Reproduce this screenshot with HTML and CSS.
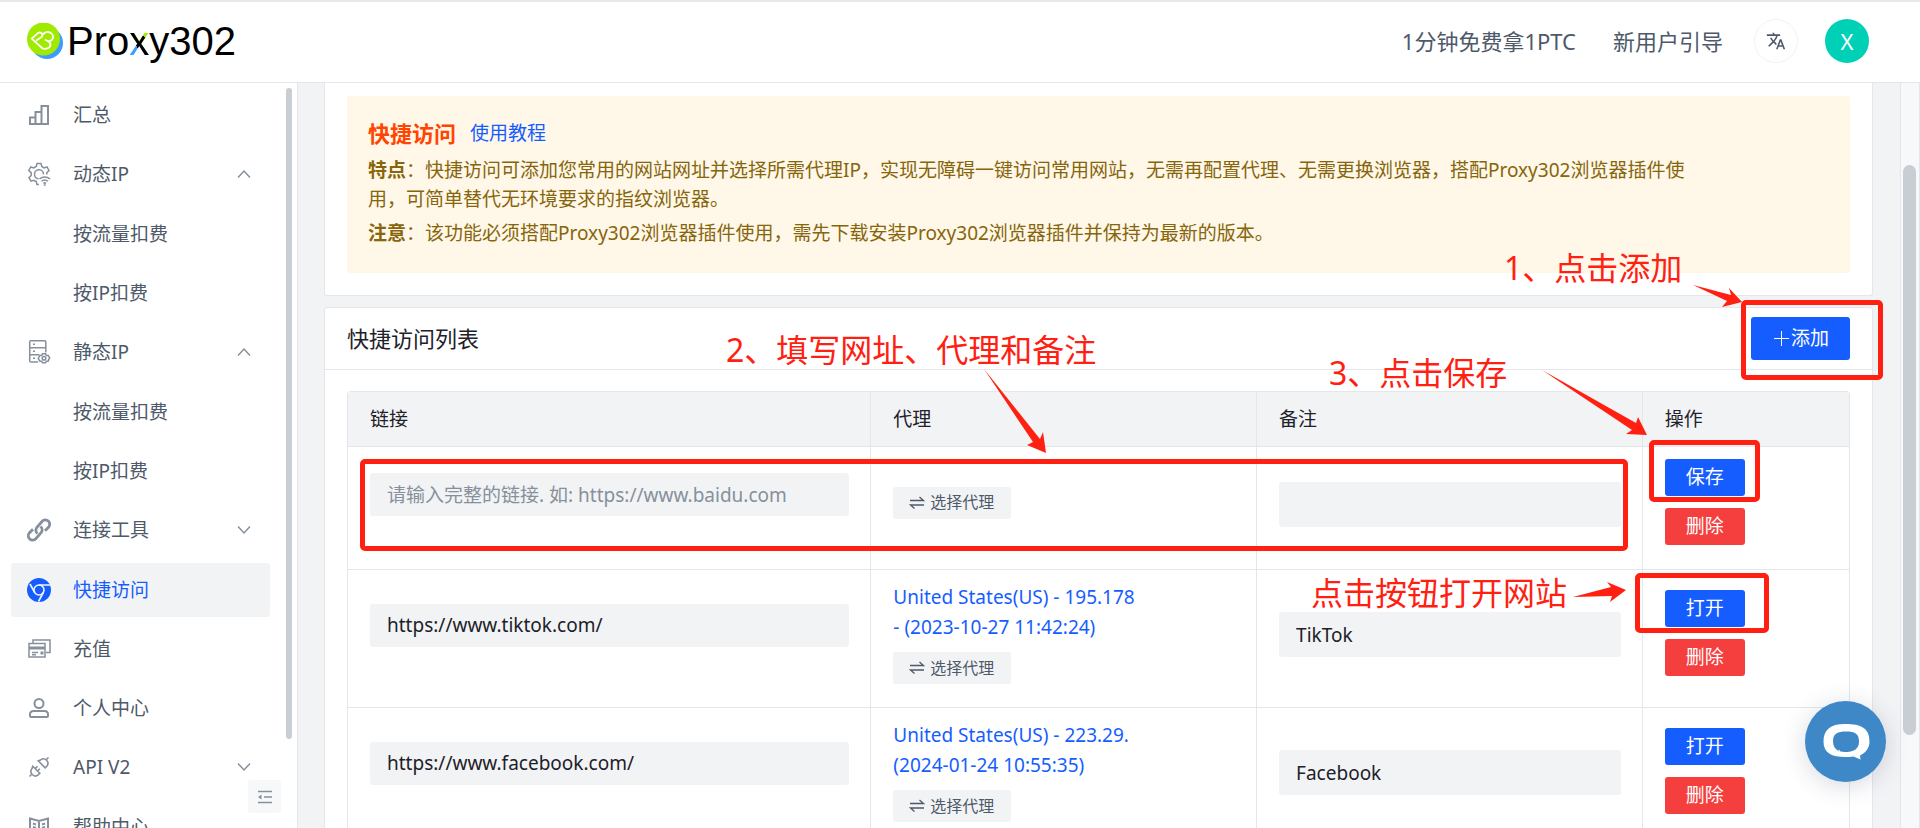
FILE: index.html
```html
<!DOCTYPE html>
<html lang="zh-CN">
<head>
<meta charset="utf-8">
<title>Proxy302 快捷访问</title>
<link rel="stylesheet" href="styles.css">
</head>
<body>
<svg class="sprite" aria-hidden="true">
  <symbol id="up" viewBox="0 0 14 14"><path d="M1 10.500 7 4l6 6.500"/></symbol>
  <symbol id="down" viewBox="0 0 14 14"><path d="M1 3.500 7 10l6-6.500"/></symbol>
  <symbol id="swap" viewBox="0 0 16 16"><path d="M1 5.500h13.500L10.500 2M15 10H1.500l4 3.500"/></symbol>
</svg>

<header class="topbar">
  <a class="logo" href="#">
    <svg class="logo-mark" viewBox="0 0 37 37" aria-hidden="true">
      <circle cx="20" cy="20" r="16" fill="#3d9bff"/>
      <circle cx="16.500" cy="16" r="16.500" fill="#a0ea00"/>
      <g fill="none" stroke="#fff" stroke-width="1.800" stroke-linecap="round" stroke-linejoin="round">
        <path d="M9.700 17.300 14.500 14c2.200-1.800-.2-5.800-3-4.300L4.700 15.700 15 25c2 1.500 6.500.8 8-1.500 1-2 0-4-1.800-5.200 3.500-.3 5.300-2.500 4.800-5.300-.5-3-3.700-4.500-6.500-3.800-1.300.2-2.300.8-3 1.600"/>
        <path d="M21.200 18.300 18.500 17"/>
      </g>
    </svg>
    <span class="logo-text">Pro<span class="logo-x">x</span>y302</span>
  </a>
  <nav class="topnav">
    <a href="#">1分钟免费拿1PTC</a>
    <a href="#">新用户引导</a>
    <button class="lang" aria-label="切换语言">
      <svg viewBox="0 0 24 24" width="20" height="20"><path d="M12.870 15.070l-2.540-2.510.03-.03A17.520 17.520 0 0 0 14.070 6H17V4h-7V2H8v2H1v2h11.170C11.500 7.920 10.440 9.750 9 11.350 8.070 10.320 7.300 9.190 6.690 8h-2c.73 1.630 1.730 3.170 2.980 4.560l-5.090 5.020L4 19l5-5 3.110 3.110.76-2.040zM18.500 10h-2L12 22h2l1.120-3h4.750L21 22h2l-4.500-12zm-2.620 7l1.620-4.330L19.120 17h-3.240z"/></svg>
    </button>
    <button class="avatar">X</button>
  </nav>
</header>

<div class="body">
  <aside class="sidebar">
    <nav class="menu">
      <a class="item" href="#"><svg class="ico" viewBox="0 0 24 24"><path d="M3 14.500h5.500V21H3zM8.500 9h6v12h-6zM14.500 3H21v18h-6.500z"/></svg><span>汇总</span></a>
      <a class="item parent" href="#"><svg class="ico thin" viewBox="0 0 24 24"><path d="M12 22.500h-2l-.8-3-2.200-1.200-3 .9-2-3.500 2.200-2.200v-2.800L1.800 8.500l2-3.500 3 .9L9.200 4.500 10 1.500h4l.8 3L17 5.900l3-.9 2 3.500-2.200 2.200v1.800"/><path d="M16.500 12.500a4.500 4.500 0 1 0-5 4.300M12.500 17a8 8 0 0 1 10.500 0M14.500 19.300a5 5 0 0 1 6.500 0M16.400 21.300a2.500 2.500 0 0 1 2.700 0"/><circle cx="17.700" cy="23" r=".3"/></svg><span>动态IP</span><svg class="chev"><use href="#up"/></svg></a>
      <div class="submenu">
        <a class="item" href="#">按流量扣费</a>
        <a class="item" href="#">按IP扣费</a>
      </div>
      <a class="item parent" href="#"><svg class="ico thin" viewBox="0 0 24 24"><path d="M11 22H4a1.300 1.300 0 0 1-1.300-1.300V2A1.300 1.300 0 0 1 4 .7h13.500A1.300 1.300 0 0 1 18.800 2v10.500M2.700 7.700h16M2.700 14.700h9.500M6 4.300h2M6 11.200h2M6 18.300h2"/><path d="M15.500 13.800h3l.9 1.600h1.800l1.500 2.600-.9 1.200-.6 2h-1.800l-.9 1.600h-3l-.9-1.600h-1.800L11.300 18.600l1.500-3.200h1.800z"/><circle cx="17" cy="18.300" r="1.800"/></svg><span>静态IP</span><svg class="chev"><use href="#up"/></svg></a>
      <div class="submenu">
        <a class="item" href="#">按流量扣费</a>
        <a class="item" href="#">按IP扣费</a>
      </div>
      <a class="item parent" href="#"><svg class="ico bold" viewBox="0 0 24 24"><path d="M10.500 15.500a4.500 4.500 0 0 1-.6-6.200l5.300-6a4.300 4.300 0 0 1 6.300 5.900L18 12.800"/><path d="M13.500 8.500a4.500 4.500 0 0 1 .6 6.200l-5.300 6a4.300 4.300 0 0 1-6.300-5.900L6 11.200"/></svg><span>连接工具</span><svg class="chev"><use href="#down"/></svg></a>
      <a class="item active" href="#"><svg class="ico" viewBox="0 0 24 24"><circle class="fill" cx="12" cy="12" r="12"/><g class="cut"><circle cx="12" cy="12" r="5"/><path d="M12 7h11M7.700 14.500 3 6M16.300 14.500 11.500 23.500"/></g></svg><span>快捷访问</span></a>
      <a class="item" href="#"><svg class="ico thin" viewBox="0 0 24 24"><path d="M2 6.500h16V20H2zM6 6V3h17v12.500h-4M5 15.500h6M5 17.800h4"/><path class="fill" d="M2 9.500h16v3H2zM13.500 14.500h3v3h-3z"/></svg><span>充值</span></a>
      <a class="item" href="#"><svg class="ico" viewBox="0 0 24 24"><circle cx="12" cy="7.500" r="4.500"/><path d="M3 20v-1.500C3 16.500 4.500 15 6.500 15h11c2 0 3.500 1.500 3.500 3.500V20a1 1 0 0 1-1 1H4a1 1 0 0 1-1-1z"/></svg><span>个人中心</span></a>
      <a class="item parent" href="#"><svg class="ico mid" viewBox="0 0 24 24"><path d="m2.500 21.500 2.500-2.500M19 5l2.500-2.500M5.800 11.200l7 7-1.600 1.600a4.400 4.400 0 0 1-6.200-6.200zM11.200 5.800l7 7 1.600-1.600a4.400 4.400 0 0 0-6.200-6.200zM8.200 13.600l2.300-2.300M10.600 16l2.300-2.300"/></svg><span>API V2</span><svg class="chev"><use href="#down"/></svg></a>
      <a class="item" href="#"><svg class="ico" viewBox="0 0 24 24"><path d="M12 6v15M3 3.500 12 6l9-2.500V19l-9 2.500L3 19zM6 8.500l3 1M6 12l3 1M18 8.500l-3 1M18 12l-3 1"/></svg><span>帮助中心</span></a>
    </nav>
    <div class="side-thumb"></div>
    <button class="collapse" aria-label="收起菜单"><svg viewBox="0 0 16 16" width="16" height="16"><path d="M1 2.500h14M7 8h8M1 13.500h14" fill="none" stroke="#86909c" stroke-width="1.500"/><path d="M4.500 5.500v5L1 8z" fill="#86909c"/></svg></button>
  </aside>

  <main class="content">
    <section class="card card-intro">
      <div class="notice">
        <div class="notice-head"><h2>快捷访问</h2><a href="#">使用教程</a></div>
        <p><strong>特点</strong>：快捷访问可添加您常用的网站网址并选择所需代理IP，实现无障碍一键访问常用网站，无需再配置代理、无需更换浏览器，搭配Proxy302浏览器插件使用，可简单替代无环境要求的指纹浏览器。</p>
        <p><strong>注意</strong>：该功能必须搭配Proxy302浏览器插件使用，需先下载安装Proxy302浏览器插件并保持为最新的版本。</p>
      </div>
    </section>

    <section class="card">
      <div class="card-head">
        <h1>快捷访问列表</h1>
        <button class="btn-add"><svg viewBox="0 0 19 19" width="19" height="19"><path d="M9.500 2v15M2 9.500h15" stroke="#fff"/></svg>添加</button>
      </div>
      <div class="card-body">
        <table class="list">
          <colgroup><col class="c-link"><col class="c-proxy"><col class="c-note"><col class="c-act"></colgroup>
          <thead><tr><th>链接</th><th>代理</th><th>备注</th><th>操作</th></tr></thead>
          <tbody>
            <tr>
              <td><input class="url" type="text" aria-label="链接" placeholder="请输入完整的链接. 如: https://www.baidu.com"></td>
              <td><button class="pick"><svg><use href="#swap"/></svg>选择代理</button></td>
              <td><input class="note" type="text" aria-label="备注"></td>
              <td><button class="act">保存</button><button class="act del">删除</button></td>
            </tr>
            <tr>
              <td><input class="url" type="text" aria-label="链接" value="https://www.tiktok.com/"></td>
              <td><a class="proxy" href="#">United States(US) - 195.178<br>- (2023-10-27 11:42:24)</a><button class="pick"><svg><use href="#swap"/></svg>选择代理</button></td>
              <td><input class="note" type="text" aria-label="备注" value="TikTok"></td>
              <td><button class="act">打开</button><button class="act del">删除</button></td>
            </tr>
            <tr>
              <td><input class="url" type="text" aria-label="链接" value="https://www.facebook.com/"></td>
              <td><a class="proxy" href="#">United States(US) - 223.29.<br>(2024-01-24 10:55:35)</a><button class="pick"><svg><use href="#swap"/></svg>选择代理</button></td>
              <td><input class="note" type="text" aria-label="备注" value="Facebook"></td>
              <td><button class="act">打开</button><button class="act del">删除</button></td>
            </tr>
          </tbody>
        </table>
      </div>
    </section>
  </main>
  <div class="track"><div class="thumb"></div></div>
</div>

<button class="chat" aria-label="在线客服">
  <svg viewBox="0 0 81 81" width="81" height="81"><path fill="#fff" fill-rule="evenodd" d="M40 23c16 0 24.500 4 24.500 17.500 0 6.500-3.500 11-9.500 14l.5 4-7-3c-3 .5-5 .5-8 .5-14 0-22-4-22-15.500S25 23 40 23zm1.500 7.500c-9 0-13.500 2-13.500 10 0 4.500 2 7.500 5.500 9.500l.5-1.500 1.500 2 4 .5c9 0 14.500-2.500 14.500-10.500s-4.500-10-12.500-10z"/></svg>
</button>

<div class="guide">
  <svg class="arrows" viewBox="0 0 1920 828" width="1920" height="828" aria-hidden="true">
    <path d="M1693 285 1731 295 1729 288 1742 302 1722 307 1727 301z"/>
    <path d="M984 369 1040 439 1043 432 1046 453 1027 445 1033 442z"/>
    <path d="M1542 370 1636 423 1638 417 1647 435 1626 434 1632 430z"/>
    <path d="M1573 597 1611 587 1607 582 1626 590 1610 602 1612 596z"/>
  </svg>
  <span class="tip tip-add">1、点击添加</span>
  <span class="tip tip-fill">2、填写网址、代理和备注</span>
  <span class="tip tip-save">3、点击保存</span>
  <span class="tip tip-open">点击按钮打开网站</span>
  <div class="box box-add"></div>
  <div class="box box-fill"></div>
  <div class="box box-save"></div>
  <div class="box box-open"></div>
</div>
</body>
</html>
```
FILE: styles.css
```css
* { box-sizing: border-box; }

body {
  position: relative;
  display: flex;
  flex-direction: column;
  height: 100vh;
  margin: 0;
  overflow: hidden;
  background: #f2f3f5;
  color: #1d2129;
  font: 19px/29px "Noto Sans", "Noto Sans CJK SC", sans-serif;
}

a { color: inherit; text-decoration: none; }
button, input { border: 0; border-radius: 3px; font: inherit; }
h1, h2, p { margin: 0; }
.sprite { display: none; }

/* Top bar */
.topbar {
  display: flex;
  flex: none;
  justify-content: space-between;
  align-items: center;
  height: 83px;
  padding: 0 51px 2px 27px;
  border-top: 2px solid #e8e8e8;
  border-bottom: 1px solid #e5e6eb;
  background: #fff;
}
.logo { display: flex; align-items: center; gap: 3px; }
.logo-mark { width: 37px; height: 37px; }
.logo-text { color: #000; font: 40px/44px "Liberation Sans", sans-serif; }
.logo-x {
  background: linear-gradient(55deg, transparent 38%, #000 38%, #000 66%, transparent 66%), linear-gradient(to bottom, #a0ea00 60%, #3d9bff 60%);
  background-clip: text;
  color: transparent;
}
.topnav { display: flex; align-items: center; gap: 37px; color: #4e5969; font-size: 22px; }
.lang, .avatar { width: 44px; height: 44px; border-radius: 50%; }
.lang {
  display: grid;
  place-items: center;
  margin: 0 -10px 0 -6px;
  padding: 0;
  border: 1px solid #f2f3f5;
  background: #fff;
}
.lang svg { fill: #4e5969; }
.avatar { background: #00d0b6; color: #fff; padding: 0; }

.body { display: flex; flex: 1; min-height: 0; }

/* Sidebar */
.sidebar {
  position: relative;
  flex: none;
  width: 298px;
  padding: 5px 27px 0 11px;
  overflow: hidden;
  border-right: 1px solid #e5e6eb;
  background: #fff;
}
.item {
  display: flex;
  align-items: center;
  gap: 22px;
  height: 54px;
  margin-bottom: 5px;
  padding: 0 19px 0 16px;
  border-radius: 3px;
  color: #4e5969;
}
.item.parent { margin-bottom: 6px; }
.submenu .item { padding-left: 62px; }
.item.active { background: #f2f3f5; color: #165dff; }
.ico { flex: none; width: 24px; height: 24px; fill: none; stroke: #86909c; stroke-width: 2; }
.ico.thin { stroke-width: 1.5; }
.ico.mid { stroke-width: 1.6; }
.ico.bold { stroke-width: 2.8; }
.ico .fill { fill: #86909c; stroke: none; }
.active .fill { fill: #165dff; }
.active .cut { stroke: #f2f3f5; stroke-width: 1.6; }
.chev { width: 14px; height: 14px; margin-left: auto; fill: none; stroke: #86909c; stroke-width: 1.5; }
.side-thumb {
  position: absolute;
  top: 5px;
  right: 5px;
  width: 6px;
  height: 651px;
  border-radius: 3px;
  background: #c9cdd4;
}
.collapse {
  position: absolute;
  right: 16px;
  bottom: 15px;
  display: grid;
  place-items: center;
  width: 33px;
  height: 33px;
  padding: 0;
  background: #f7f8fa;
}

/* Content */
.content {
  display: flex;
  flex: 1;
  flex-direction: column;
  gap: 11px;
  min-width: 0;
  padding: 0 27px 0 26px;
  overflow: hidden;
}
.card { flex: none; border: 1px solid #e5e6eb; border-radius: 3px; background: #fff; }
.card-intro { padding: 13px 22px 22px; border-top: 0; border-radius: 0 0 3px 3px; }
.notice { padding: 22px 160px 20px 21px; border-radius: 3px; background: #fff7e8; color: #86650b; }
.notice-head { display: flex; align-items: center; gap: 14px; margin-bottom: 8px; line-height: 30px; }
.notice-head h2 { color: #ff4500; font-size: 22px; }
.notice-head a { color: #165dff; }
.notice p { margin-bottom: 5px; }

.card-head {
  display: flex;
  justify-content: space-between;
  align-items: center;
  height: 62px;
  padding: 0 22px;
  border-bottom: 1px solid #e5e6eb;
}
.card-head h1 { font-size: 22px; font-weight: 400; }
.btn-add {
  display: flex;
  align-items: center;
  height: 43px;
  padding: 0 21px;
  background: #165dff;
  color: #fff;
}
.card-body { padding: 21px 22px; }

.list {
  width: 100%;
  table-layout: fixed;
  border-spacing: 0;
  border: 1px solid #e5e6eb;
  border-bottom: 0;
  border-radius: 4px 4px 0 0;
}
.c-link { width: 34.8%; }
.c-proxy, .c-note { width: 25.7%; }
.c-act { width: 13.8%; }
.list th {
  height: 55px;
  padding: 0 22px;
  border-bottom: 1px solid #e5e6eb;
  background: #f2f3f5;
  font-weight: 400;
  text-align: left;
}
.list td { padding: 12px 21px 12px 22px; border-bottom: 1px solid #e5e6eb; }
.list th + th, .list td + td { border-left: 1px solid #e5e6eb; }

.url, .note { display: block; width: 100%; padding: 0 17px; background: #f2f3f5; color: #1d2129; }
.url { height: 43px; margin-bottom: 27px; }
.note { height: 45px; margin-bottom: 8px; }
.url::placeholder { color: #86909c; opacity: 1; }

.proxy { display: block; margin-bottom: 10px; color: #165dff; line-height: 30px; }
.pick {
  display: flex;
  align-items: center;
  gap: 5px;
  height: 32px;
  margin-bottom: 11px;
  padding: 0 17px 0 16px;
  background: #f2f3f5;
  color: #4e5969;
  font-size: 16px;
}
.pick svg { width: 16px; height: 16px; fill: none; stroke: #4e5969; stroke-width: 1.3; }
.act {
  display: block;
  width: 80px;
  height: 37px;
  margin-bottom: 12px;
  padding: 0;
  background: #165dff;
  color: #fff;
}
.act.del { background: #f53f3f; }

/* Page scrollbar */
.track {
  flex: none;
  width: 20px;
  padding: 82px 3px 0 2px;
  border: 1px solid #e5e6eb;
  border-width: 0 1px;
  background: #f7f8fa;
}
.thumb { height: 570px; border-radius: 7px; background: #c9cdd4; }

.chat {
  position: absolute;
  right: 34px;
  bottom: 46px;
  width: 81px;
  height: 81px;
  padding: 0;
  border-radius: 50%;
  background: #3f88c8;
  box-shadow: 0 4px 24px rgba(40, 50, 90, .18);
}
.chat svg { display: block; }

/* Tutorial annotations laid over the page */
.guide { position: absolute; inset: 0; overflow: hidden; pointer-events: none; }
.arrows { display: block; fill: #ff2012; }
.tip { position: absolute; color: #ff2012; font-size: 32px; line-height: 40px; white-space: nowrap; }
.tip-add { left: 1504px; top: 248px; }
.tip-fill { left: 726px; top: 330px; }
.tip-save { left: 1329px; top: 353px; }
.tip-open { left: 1311px; top: 573px; }
.box { position: absolute; border: 5px solid #ff2012; border-radius: 5px; }
.box-add { left: 1741px; top: 300px; width: 142px; height: 80px; }
.box-fill { left: 360px; top: 459px; width: 1268px; height: 92px; }
.box-save { left: 1649px; top: 440px; width: 111px; height: 62px; }
.box-open { left: 1635px; top: 573px; width: 134px; height: 60px; }
```
